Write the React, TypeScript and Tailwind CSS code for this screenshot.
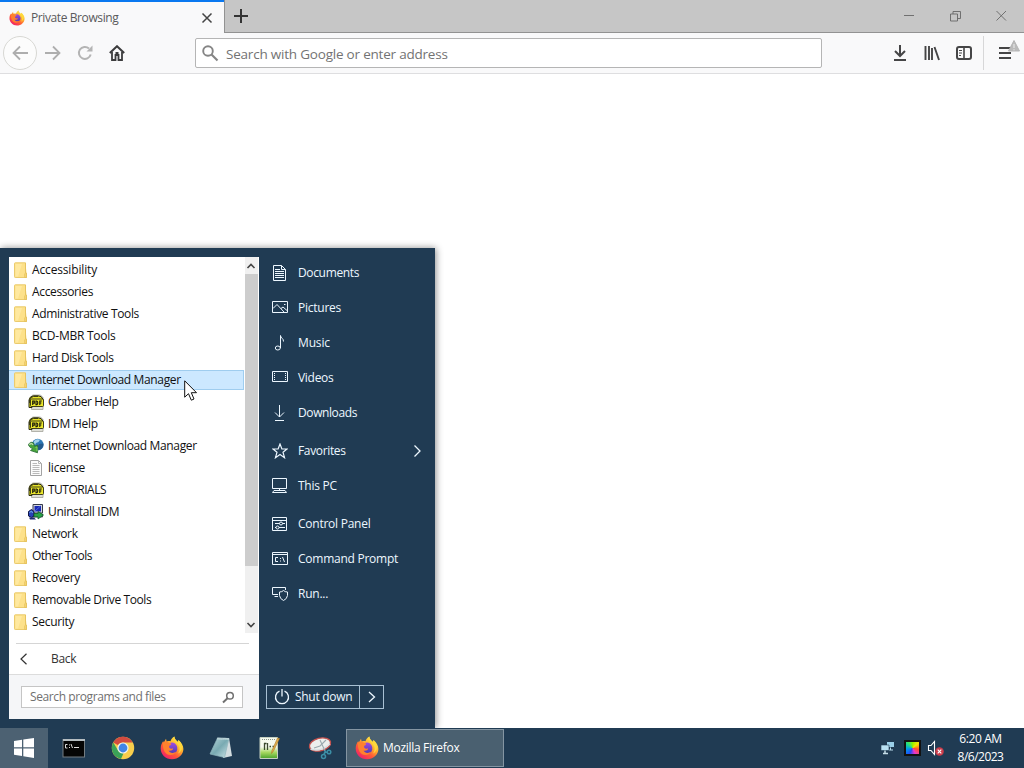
import React from 'react';

const stroke = { fill: 'none', stroke: 'currentColor' };

function Firefox({ size, id }: { size: number; id: string }) {
  return (
    <svg width={size} height={size} viewBox="0 0 24 24" className="shrink-0">
      <defs>
        <linearGradient id={`${id}a`} x1="0.85" y1="0.1" x2="0.2" y2="0.95">
          <stop offset="0" stopColor="#fff04a" />
          <stop offset="0.35" stopColor="#ffb02e" />
          <stop offset="0.65" stopColor="#ff5a36" />
          <stop offset="1" stopColor="#f01f6b" />
        </linearGradient>
        <linearGradient id={`${id}b`} x1="0.5" y1="0" x2="0.5" y2="1">
          <stop offset="0" stopColor="#a04be0" />
          <stop offset="1" stopColor="#4b3bb5" />
        </linearGradient>
      </defs>
      <path d="M12 23.2C5.6 23.2.7 18.4.7 12.4.7 9.2 1.8 6.8 3.3 5L3.6 6.8 6 2.8 6.7 5.6C8 5 9.5 5 10.5 5.3 11 3.5 12.5 1.5 14.5.6 14.4 3 16 4.5 18 6L18.5 4C21.5 6.5 23.4 9.500 23.4 13 23.4 18.6 18.2 23.2 12 23.2Z" fill={`url(#${id}a)`} />
      <path d="M7.5 9.500C9 6.500 12.5 5.500 15 7.500 17.500 9.500 18 13 16.500 15.500 15 18 10.500 18.400 8.300 16 6.800 14.300 7 12 7.500 9.500Z" fill={`url(#${id}b)`} />
      <path d="M3 6.500C5 5.300 7 5.500 8.200 6.600L11 7.500C11.500 8.300 10.800 9.200 9.300 9.700 8.800 10.600 9 11.800 10.500 12.500 11.500 13 12.500 12.300 13.200 12.600 12.800 14.600 10 15.200 8.500 14.500 10 17.500 13.500 17.600 16.500 15.500 13.500 20.500 7 20 4.500 15.500 3 12.700 2.700 9.500 3 6.500Z" fill="#ff812e" />
      <path d="M14.500.6C13 3.500 15.500 5.500 18 8.500 20.500 11.500 20 15 18 17.500 23 15 23.500 9 18.500 4L18 6C16 4.500 14.400 3 14.500.6Z" fill="#ffd83b" />
    </svg>
  );
}

function Folder() {
  return (
    <svg width="14" height="17" viewBox="0 0 14 17" className="shrink-0">
      <path d="M.5 1.500Q.5.8 1.200.8H11.500V11H12.500V15.500H1.200Q.5 15.500.5 14.800Z" fill="#fde18a" stroke="#ebcb6d" />
      <path d="M1.500 2H8L4 14.500H1.500Z" fill="#ffe9a0" />
      <path d="M11.500 1V11L10.700 12V15.500H12.500V11" fill="#f8d675" stroke="#e3c05c" strokeWidth=".8" />
    </svg>
  );
}

function Pdf() {
  return (
    <svg width="16" height="16" viewBox="0 0 16 16" className="shrink-0">
      <path d="M4.500 1H12.500L15 3.500V15.500H3.500V3Z" fill="#deded6" stroke="#a3a39b" strokeWidth=".8" />
      <path d="M1 13.500V6Q1.500 2.300 5.500 1.800H10Q14 2 14.800 5V6H4V13.500Z" fill="#e7e326" stroke="#2a2a10" />
      <path d="M1.500 9V6Q2 3 5.500 2.500H10" fill="none" stroke="#3b3b15" />
      <rect x="2.500" y="5" width="13" height="7.500" rx="1" fill="#ebe72c" stroke="#2d2d10" strokeWidth=".9" />
      <path d="M4.700 11V7H6.300V9.200H5M8 7V10.700H8.700Q9.800 10.500 9.800 8.800T8.700 7ZM11.800 11V7H13.800M11.800 9H13.400" fill="none" stroke="#15150a" strokeWidth="1.100" />
    </svg>
  );
}

function IdmGlobe() {
  return (
    <svg width="16" height="16" viewBox="0 0 16 16" className="shrink-0">
      <circle cx="9.700" cy="6.700" r="5.900" fill="#2d78b5" />
      <path d="M5.500 4C7 1 10 .5 12 1.800L10.500 4 8 5 7 7Z" fill="#a0d2ec" />
      <path d="M11 6L15.500 5.500C15.500 9 13.500 12 10.500 12L9.500 9Z" fill="#24598c" />
      <path d="M.3 6.800Q2.500 2.800 5.500 5L6.500 8.200 9.800 7 9.500 14.800 2.500 12.500 4.800 10.800Q1.500 9.800 .3 6.800Z" fill="#46a33b" stroke="#286b35" strokeWidth=".8" />
      <path d="M1.300 6.700Q3.700 4.500 5 7" stroke="#c1dcad" strokeWidth="1.300" fill="none" />
      <path d="M7.500 9.500L9 9V13" stroke="#8acd61" fill="none" />
    </svg>
  );
}

function TextFile() {
  return (
    <svg width="16" height="16" viewBox="0 0 16 16" className="shrink-0">
      <path d="M2.500.5H10.500L13.500 3.500V15.500H2.500Z" fill="#fcfcfc" stroke="#a3a3a3" />
      <path d="M10.500.5V3.500H13.500M4.500 3.500H9M4.500 5.500H11.500M4.500 7.500H11.500M4.500 9.500H11.500M4.500 11.500H11.500M4.500 13.500H11.500" fill="none" stroke="#b2b2b2" strokeWidth=".9" />
    </svg>
  );
}

function Uninstall() {
  return (
    <svg width="16" height="16" viewBox="0 0 16 16" className="shrink-0">
      <path d="M5 .5H14.500V9H5Z" fill="#d3d7de" stroke="#34394b" />
      <rect x="6.500" y="2" width="6.500" height="5.500" fill="#1929b5" />
      <path d="M7 7L12.500 2" stroke="#4a65e0" />
      <path d="M4 10H14.500V13H4Z" fill="#aab0bb" stroke="#353b49" strokeWidth=".8" />
      <path d="M.5 7.500L3.500 5.500 6 7.500V12L3.500 13.500.5 12Z" fill="#2741b8" stroke="#111746" />
      <path d="M1.500 8.500L3 7.500L5 8.500" stroke="#7ab9ef" fill="none" />
      <path d="M6 9.500H10V7.500L15.500 11 10 15V12.800H6Z" fill="#27a347" stroke="#0d5625" strokeWidth=".7" />
      <path d="M1 13.500H6L8 15.500H2Z" fill="#202b74" />
    </svg>
  );
}

type Entry = { label: string; kind?: 'pdf' | 'idm' | 'txt' | 'un'; track: string; selected?: boolean };

const entries: Entry[] = [
  { label: 'Accessibility', track: 'tracking-[-0.15px]' },
  { label: 'Accessories', track: 'tracking-[-0.35px]' },
  { label: 'Administrative Tools', track: 'tracking-[-0.35px]' },
  { label: 'BCD-MBR Tools', track: 'tracking-[-0.25px]' },
  { label: 'Hard Disk Tools', track: 'tracking-[-0.4px]' },
  { label: 'Internet Download Manager', track: 'tracking-[-0.36px]', selected: true },
  { label: 'Grabber Help', kind: 'pdf', track: 'tracking-[-0.45px]' },
  { label: 'IDM Help', kind: 'pdf', track: 'tracking-[-0.25px]' },
  { label: 'Internet Download Manager', kind: 'idm', track: 'tracking-[-0.36px]' },
  { label: 'license', kind: 'txt', track: 'tracking-[-0.2px]' },
  { label: 'TUTORIALS', kind: 'pdf', track: 'tracking-[-0.5px]' },
  { label: 'Uninstall IDM', kind: 'un', track: 'tracking-[-0.3px]' },
  { label: 'Network', track: 'tracking-[-0.3px]' },
  { label: 'Other Tools', track: 'tracking-[-0.5px]' },
  { label: 'Recovery', track: 'tracking-[-0.35px]' },
  { label: 'Removable Drive Tools', track: 'tracking-[-0.4px]' },
  { label: 'Security', track: 'tracking-[-0.3px]' },
];

function EntryIcon({ kind }: { kind?: Entry['kind'] }) {
  if (kind === 'pdf') return <Pdf />;
  if (kind === 'idm') return <IdmGlobe />;
  if (kind === 'txt') return <TextFile />;
  if (kind === 'un') return <Uninstall />;
  return <Folder />;
}

const places: { label: string; track: string; gap?: boolean; icon: React.ReactNode; arrow?: boolean }[] = [
  { label: 'Documents', track: 'tracking-[-0.35px]', icon: <path d="M1.500.5H9.500L13.500 4.500V15.500H1.500ZM9.500.5V4.500H13.500M3 4.500H8M3 6.500H12M3 8.500H12M3 10.500H12M3 12.500H12" /> },
  { label: 'Pictures', track: 'tracking-[-0.25px]', icon: <path d="M.5 1.500H15.500V12.500H.5ZM1 8.500L5 4.500 12 12M9 8.500L11 7 15 10.500M12 4.500H13.500" /> },
  { label: 'Music', track: 'tracking-[-0.15px]', icon: <><ellipse cx="5.800" cy="13" rx="2.500" ry="2" /><path d="M8.500 13V.5C8.500 3 11.800 3.500 11.500 6.500" /></> },
  { label: 'Videos', track: 'tracking-[-0.3px]', icon: <><path d="M.5 1.500H15.500V11.500H.5Z" /><path d="M2.500 3V11M13.500 3V11" strokeDasharray="1 1" /></> },
  { label: 'Downloads', track: 'tracking-[-0.4px]', icon: <path d="M7.500 0V12M3 7.500L7.500 12 12 7.500M3 15.500H12" /> },
  { label: 'Favorites', track: 'tracking-[-0.35px]', gap: true, arrow: true, icon: <path d="M8 1L9.900 6H15L11 9.200 12.500 14.700 8 11.500 3.500 14.700 5 9.200 1 6H6.100Z" strokeWidth="1.200" /> },
  { label: 'This PC', track: 'tracking-[-0.25px]', icon: <path d="M.5.5H14.500V10.500H.5ZM7.500 10.500V12.500M5 12.500H10M2 12.500H13L14.500 14.500H.5Z" /> },
  { label: 'Control Panel', track: 'tracking-[-0.25px]', gap: true, icon: <><path d="M.5 1.500H14.500V14.500H.5ZM.5 4.500H14.500M3 7.500H7.500M10.500 7.500H13M3 11.500H4M7 11.500H13" /><circle cx="9" cy="7.500" r="1.500" /><circle cx="5.500" cy="11.500" r="1.500" /></> },
  { label: 'Command Prompt', track: 'tracking-[-0.25px]', icon: <><path d="M.5 1.500H15.500V13.500H.5ZM.5 3.500H15.500" /><path d="M6 6.500H3.500V10.500H6M8.500 7V8M8.500 9.500V10.500M10.500 6L12.500 11" /></> },
  { label: 'Run...', track: 'tracking-[-0.25px]', icon: <><path d="M6 8.500H.5V1.500H13.500V4M2.500 10.500H6" /><path d="M7.500 6Q10 6 11.500 4.500 13 6 15.500 6V9.500Q15 13 11.500 14.500 8 13 7.500 9.500Z" /></> },
];

function StartMenu() {
  return (
    <div className="absolute left-0 top-[248px] flex h-[480px] w-[435px] bg-[#203b53] pl-[9px] pt-[9px] pb-[9px] shadow-[1px_0_7px_rgba(0,0,0,0.45)]">
      <div className="flex h-[462px] w-[250px] flex-col bg-white">
        <div className="flex h-[376px]">
          <div className="w-[235px] pt-[2px] text-[12px] text-[#111]">
            {entries.map((e, i) => (
              <div key={i} className={`flex h-[22px] items-center ${e.kind ? 'gap-1 pl-[19px]' : 'gap-1 pl-[5px]'}`}>
                {e.selected ? (
                  <div className="-ml-[5px] flex h-[20px] w-[235px] items-center gap-1 border border-l-0 border-[#9fcdef] bg-[#cce8ff] pl-[5px]">
                    <EntryIcon kind={e.kind} />
                    <span className={`whitespace-nowrap leading-[20px] ${e.track}`}>{e.label}</span>
                  </div>
                ) : (
                  <>
                    <EntryIcon kind={e.kind} />
                    <span className={`whitespace-nowrap leading-[20px] ${e.track}`}>{e.label}</span>
                  </>
                )}
              </div>
            ))}
          </div>
          <div className="ml-[1px] flex w-[13px] flex-col bg-[#f0f0f0]">
            <svg width="13" height="17" {...stroke} className="text-[#444]"><path d="M2.500 11L6 7.500 9.500 11" strokeWidth="1.600" /></svg>
            <div className="h-[292px] bg-[#cdcdcd]" />
            <div className="flex-1" />
            <svg width="13" height="17" {...stroke} className="text-[#444]"><path d="M2.500 7L6 10.500 9.500 7" strokeWidth="1.600" /></svg>
          </div>
        </div>
        <div className="ml-[7px] mt-[10px] h-px w-[233px] bg-[#d5d5d5]" />
        <div className="flex h-[30px] items-center pl-[10px] text-[12px] text-[#333]">
          <svg width="10" height="12" {...stroke}><path d="M7.500 .8L2 6 7.500 11.200" strokeWidth="1.200" /></svg>
          <span className="ml-[22px] tracking-[-0.3px]">Back</span>
        </div>
        <div className="flex flex-1 border-t border-[#dcdcdc] bg-[#f5f6f8] pl-[12px] pt-[11px]">
          <div className="flex h-[22px] w-[222px] items-center justify-between border border-[#c5c5c5] bg-white pl-[8px] pr-[7px] text-[12px] text-[#707070]">
            <span className="whitespace-nowrap tracking-[-0.4px]">Search programs and files</span>
            <svg width="13" height="13" {...stroke}><circle cx="8" cy="4.800" r="3.300" strokeWidth="1.500" /><path d="M5.500 7.300L1 11.500" strokeWidth="2" /></svg>
          </div>
        </div>
      </div>
      <div className="flex flex-1 flex-col pl-[7px] text-[12px] font-medium text-[#edf7ff]">
        <div className="-mt-[2px]">
          {places.map((p) => (
            <div key={p.label} className={`flex h-[35px] items-center pl-[6px] pr-[13px] ${p.gap ? 'mt-[3px]' : ''}`}>
              <svg width="16" height="16" viewBox="0 0 16 16" {...stroke}>{p.icon}</svg>
              <span className={`ml-[10px] flex-1 whitespace-nowrap ${p.track}`}>{p.label}</span>
              {p.arrow && <svg width="9" height="14" {...stroke}><path d="M1.500 1.500L7 7 1.500 12.500" strokeWidth="1.300" /></svg>}
            </div>
          ))}
        </div>
        <div className="mt-[74px] flex h-[24px] w-[118px] border border-[#a8c0d3]">
          <div className="flex w-[93px] items-center border-r border-[#a8c0d3] pl-[7px]">
            <svg width="16" height="16" {...stroke}><path d="M5.500 2.200A6.500 6.500 0 1 0 10.500 2.200M8 0V7.500" strokeWidth="1.300" /></svg>
            <span className="ml-[5px] whitespace-nowrap tracking-[-0.3px]">Shut down</span>
          </div>
          <div className="flex flex-1 items-center justify-center">
            <svg width="8" height="12" {...stroke}><path d="M1 1L6.500 6 1 11" strokeWidth="1.300" /></svg>
          </div>
        </div>
      </div>
    </div>
  );
}

function Browser() {
  return (
    <div className="flex h-[728px] flex-col bg-white">
      <div className="flex h-[33px] bg-[#c6c6c6]">
        <div className="flex w-[224px] items-center border-t-2 border-[#0a78f0] bg-[#f9f9fa] pl-[9px] pr-[11px] text-[12px] text-[#5a5a5c]">
          <Firefox size={16} id="tab" />
          <span className="ml-[6px] flex-1 tracking-[-0.4px]">Private Browsing</span>
          <svg width="12" height="12" {...stroke} className="text-[#444]"><path d="M1.500 1.500L10.500 10.500M10.500 1.500L1.500 10.500" strokeWidth="1.500" /></svg>
        </div>
        <div className="flex flex-1 items-center border-b border-l border-[#929292]">
          <svg width="14" height="14" {...stroke} className="ml-[9px] text-[#333]"><path d="M7 0V14M0 7H14" strokeWidth="2" /></svg>
          <div className="flex-1" />
          <svg width="104" height="12" {...stroke} className="mr-[16px] text-[#666]">
            <path d="M0 5.500H10M46.500 4H53.500V11H46.500ZM49 4V1.500H56.500V8.500H53.500M92.500 1L102 10.500M102 1L92.500 10.500" strokeWidth=".9" />
          </svg>
        </div>
      </div>
      <div className="flex h-[41px] items-center border-b border-[#dedee0] bg-[#f9f9fa] pl-[3px]">
        <div className="flex h-[34px] w-[34px] items-center justify-center rounded-full border border-[#d8d8d4] bg-[#fcfcfc]">
          <svg width="16" height="16" {...stroke} className="text-[#aeaeae]"><path d="M16 8H1.500M8 1.500L1.500 8 8 14.500" strokeWidth="1.800" /></svg>
        </div>
        <svg width="16" height="16" {...stroke} className="ml-[8px] text-[#aeaeae]"><path d="M0 8H14.500M8 1.500L14.500 8 8 14.500" strokeWidth="1.800" /></svg>
        <svg width="16" height="16" {...stroke} className="ml-[16px] text-[#b4b4b4]"><path d="M13.700 9.500A6 6 0 1 1 12 3.500" strokeWidth="2" /><path d="M15.500.5V6.500H9.500Z" fill="currentColor" stroke="none" /></svg>
        <svg width="16" height="16" {...stroke} className="ml-[16px] text-[#3c3c3d]"><path d="M.8 8L8 1.200 15.200 8" strokeWidth="2" /><path d="M3 7V15H6.500V10H9.500V15H13V7" strokeWidth="1.800" /><path d="M6.500 8H9.500" strokeWidth="2" /></svg>
        <div className="ml-[70px] flex h-[30px] w-[627px] items-center rounded-[2px] border border-[#b5b5b5] bg-white pl-[6px] text-[13.500px] text-[#737373]">
          <svg width="17" height="17" {...stroke} className="text-[#858585]"><circle cx="6" cy="6" r="4.800" strokeWidth="1.900" /><path d="M9.500 9.500L15.500 15.500" strokeWidth="2.100" /></svg>
          <span className="ml-[7px] pt-[2px] tracking-[-0.21px]">Search with Google or enter address</span>
        </div>
        <div className="flex flex-1 items-center text-[#454546]">
          <svg width="14" height="16" {...stroke} className="ml-[71px]"><path d="M7 0V10.500M2 6L7 11 12 6M1 15H13" strokeWidth="2" /></svg>
          <svg width="16" height="16" {...stroke} className="ml-[17px]"><path d="M1.500 1V15M5 1V15M8 3V15M10.500 2L15 15" strokeWidth="1.900" /></svg>
          <svg width="16" height="16" {...stroke} className="ml-[16px]"><rect x="1" y="2" width="14" height="12" rx="2" strokeWidth="2" /><path d="M8 2V14" strokeWidth="1.600" /><path d="M3 5.500H6M3 8H6M3 10.500H5" /></svg>
          <div className="ml-[11px] h-[34px] w-px bg-[#d7d7d8]" />
          <svg width="24" height="30" {...stroke} className="ml-[14px]">
            <path d="M1 10H13M1 15H13M1 20H13" strokeWidth="2" />
            <path d="M16 2.500L21.500 13H10.500Z" fill="#bbb" stroke="#b5b5b5" strokeLinejoin="round" /><path d="M16 6V10M16 11.200V12.300" stroke="#eee" />
          </svg>
        </div>
      </div>
    </div>
  );
}

function ConsoleIcon() {
  return <svg width="24" height="24"><rect x="1" y="3.500" width="21.500" height="17.500" fill="#050505" stroke="#747d82" /><path d="M1 4H23" stroke="#b5bdc1" strokeWidth="2" /><path d="M5.500 8.500H3.500V12H5.500M7.500 8.500V9.500M7.500 11V12M9 8L10.500 12M12 11.500H17" fill="none" stroke="#ddd" /></svg>;
}

function Chrome() {
  return (
    <svg width="24" height="24" viewBox="0 0 24 24">
      <circle cx="12" cy="12" r="11.200" fill="#f8ce4c" />
      <path d="M2.300 6.400A11.200 11.200 0 0 1 21.700 6.400H12Q8 6.500 7 9.300L12 12Z" fill="#d24b40" />
      <path d="M2.300 6.400L7.200 14.800Q9 17.500 12.500 17.300L10 23A11.200 11.200 0 0 1 2.300 6.400Z" fill="#3ba258" />
      <circle cx="12" cy="12" r="5.600" fill="#f0f3ef" /><circle cx="12" cy="12" r="4.400" fill="#4285e6" />
    </svg>
  );
}

function Notepad() {
  return (
    <svg width="24" height="24">
      <defs><linearGradient id="note" x1="0" y1="0" x2="1" y2="1"><stop stopColor="#b8d5da" /><stop offset=".5" stopColor="#79aab2" /><stop offset="1" stopColor="#cfe5e9" /></linearGradient></defs>
      <path d="M14 2L20 2 23 20 14 22Z" fill="#d3dde0" />
      <path d="M8.500 2L20 2.500 15.500 21.500 1 18Z" fill="url(#note)" stroke="#8eb4bc" strokeWidth=".7" />
      <path d="M8.500 2.500L19.500 3" stroke="#dce9ea" strokeDasharray="1 1" strokeWidth="2" />
    </svg>
  );
}

function EditorIcon() {
  return (
    <svg width="24" height="24">
      <defs><linearGradient id="edit" x1="0" y1="0" x2="0" y2="1"><stop offset=".45" stopColor="#f6faef" /><stop offset=".7" stopColor="#a9da62" /><stop offset="1" stopColor="#4ba32c" /></linearGradient></defs>
      <path d="M2 1.500H19.500V22.500H2Z" fill="url(#edit)" stroke="#c5d0c1" />
      <path d="M4 3.500H18" stroke="#8b9488" strokeDasharray="1 1" />
      <path d="M6.500 7V14M6 7.500H8.500M9.500 7V14M11.500 10.500H13M14.500 10.500H16" stroke="#3b4a30" strokeWidth="1.300" />
      <path d="M21.500 2.500L15.500 15 13.500 17.500 14 14.500 19.500 2Z" fill="#e2ad4d" stroke="#a87925" strokeWidth=".6" />
    </svg>
  );
}

function Snip() {
  return (
    <svg width="24" height="24" fill="none">
      <ellipse cx="12" cy="8.500" rx="10.800" ry="6.300" transform="rotate(-14 12 8.500)" fill="#ecefed" stroke="#c4514d" strokeWidth="1.400" />
      <path d="M2.500 13Q12 16.500 22 8" stroke="#d7dfe2" strokeWidth="1.500" />
      <path d="M12 4L17 15M18 4L12 10 6 12" stroke="#9aa9ae" strokeWidth="1.100" />
      <circle cx="15.500" cy="20.500" r="2" stroke="#3b8ea5" strokeWidth="1.500" /><path d="M16 18.500L17.500 14.500M17 16.500L20 16" stroke="#3b8ea5" strokeWidth="1.600" /><circle cx="21" cy="16" r="1.800" stroke="#3b8ea5" strokeWidth="1.500" />
    </svg>
  );
}

function Taskbar() {
  const apps = [<ConsoleIcon />, <Chrome />, <Firefox size={24} id="pin" />, <Notepad />, <EditorIcon />, <Snip />];
  return (
    <div className="flex h-[40px] items-center bg-[#203b53] text-[12px] text-white">
      <div className="flex h-full w-[48px] items-center justify-center bg-[#4c6172]">
        <svg width="20" height="22" fill="#fff"><path d="M0 4L8 2.800V10.200H0ZM9.300 2.600L20 1V10.200H9.300ZM0 11.500H8V18.900L0 17.800ZM9.300 11.500H20V21L9.300 19.200Z" /></svg>
      </div>
      <div className="flex w-[298px] pl-[1px]">
        {apps.map((icon, i) => <div key={i} className="flex w-[49.200px] justify-center">{icon}</div>)}
      </div>
      <div className="flex h-[38px] w-[158px] items-center border border-[#8495a2] bg-[#4a6070] pl-[8px]">
        <Firefox size={24} id="task" />
        <span className="ml-[4px] whitespace-nowrap tracking-[-0.3px]">Mozilla Firefox</span>
      </div>
      <div className="flex-1" />
      <div className="flex items-center">
        <svg width="16" height="16" fill="none">
          <path d="M6.500 1.500H14.500V7.500H6.500Z" fill="#9bd0e9" stroke="#203b53" />
          <path d="M10.500 7.500V10M9 10H13" stroke="#b5d8e8" />
          <path d="M1 5H9V10.500H1Z" fill="#b8e0f2" stroke="#203b53" strokeWidth=".6" />
          <path d="M5 10.500V13M3 13.500H8" stroke="#c5dde8" strokeWidth="1.500" />
        </svg>
        <div className="ml-[8px] h-[16px] w-[17px] border-2 border-[#121212] bg-[conic-gradient(from_0deg,#90f000,#f4e600,#ff5028,#e936ce,#2448f4,#0098ed,#20dd87,#90f000)]" />
        <svg width="18" height="18" fill="none" className="ml-[6px]">
          <path d="M1.500 6.500H4L7.500 2.500V15.500L4 11.500H1.500Z" stroke="#fff" strokeWidth="1.100" />
          <circle cx="12.500" cy="12.500" r="4.300" fill="#cb3d4b" /><path d="M10.700 10.700L14.300 14.300M14.300 10.700L10.700 14.300" stroke="#fff" strokeWidth="1.100" />
        </svg>
      </div>
      <div className="mr-[15px] ml-[7px] flex w-[57px] flex-col items-center text-[12px] leading-[18px]">
        <span className="whitespace-nowrap tracking-[-0.4px]">6:20 AM</span>
        <span className="whitespace-nowrap tracking-[-0.5px]">8/6/2023</span>
      </div>
    </div>
  );
}

export default function App() {
  return (
    <div className="relative h-[768px] w-[1024px] overflow-hidden font-['Open_Sans','Noto_Sans',sans-serif]">
      <Browser />
      <StartMenu />
      <div className="relative"><Taskbar /></div>
      <svg width="14" height="22" className="absolute left-[184px] top-[380px]"><path d="M.7 .8V17.200L4.500 13.700 7.300 20.200 10 19 7.300 12.700H12.500Z" fill="#fff" stroke="#111" /></svg>
    </div>
  );
}
